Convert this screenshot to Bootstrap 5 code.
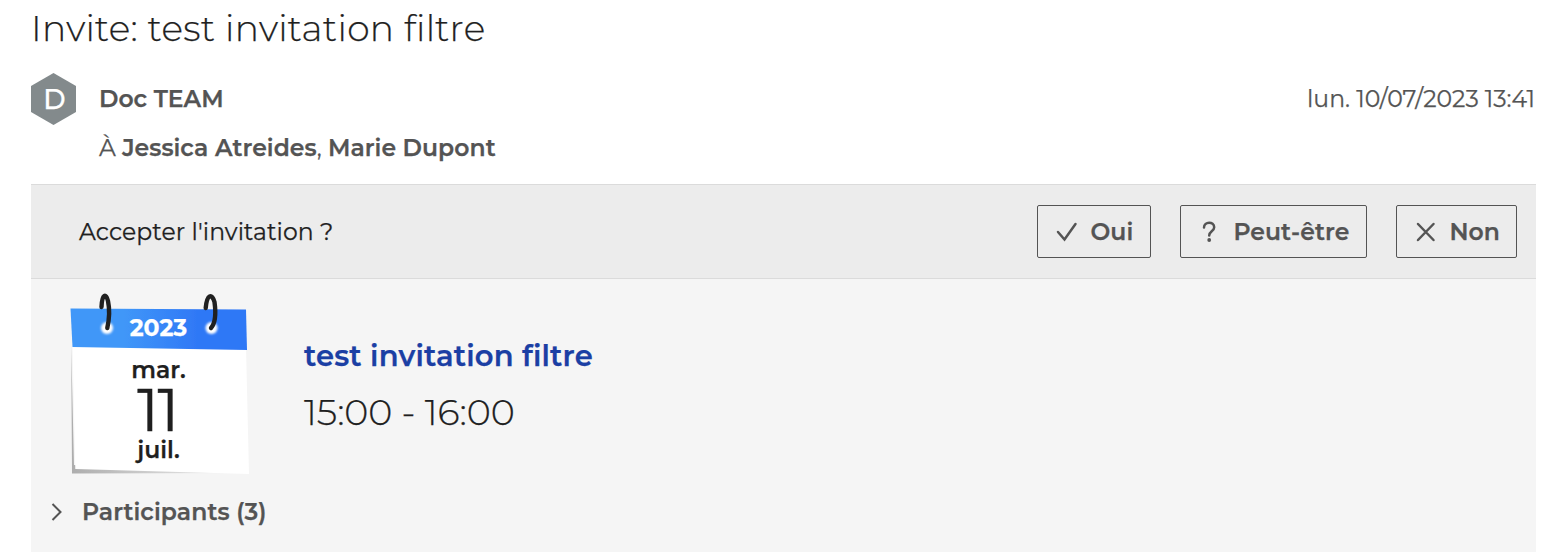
<!DOCTYPE html>
<html lang="fr">
<head>
<meta charset="utf-8">
<meta name="viewport" content="width=device-width, initial-scale=1">
<title>Invite: test invitation filtre</title>
<link href="https://cdn.jsdelivr.net/npm/bootstrap@5.3.0/dist/css/bootstrap.min.css" rel="stylesheet">
<style>
  body { font-family: Montserrat, Inter, "Open Sans", sans-serif; font-size: 23.5px; line-height: 30px; color: #1f1f1f; background: #fff; overflow: hidden; -webkit-text-stroke: .25px; }
  .message { padding: 0 28px 0 31px; height: 552px; }
  .subject { font-size: 36px; font-weight: 300; line-height: 44px; letter-spacing: .32px; padding: 6px 0 0; height: 73px; }
  .muted-ink { color: #545454; }
  .semi { font-weight: 600; }
  .avatar { width: 45px; height: 52px; background: #838a8c; color: #fff; font-size: 27px; font-weight: 500; padding: 1px 0 0 2px; clip-path: polygon(50% 0, 100% 25%, 100% 75%, 50% 100%, 0 75%, 0 25%); }
  .sender { height: 52px; padding-right: 1px; }
  .sender-name { margin-left: 23px; }
  .recipients { height: 59px; padding: 8px 0 0 68px; letter-spacing: .05px; }
  .invite-bar { height: 95px; background: #ececec; border: solid #dbdbdb; border-width: 1px 0; padding: 0 19px 0 48px; }
  .question { letter-spacing: .08px; }
  .answers { gap: 29px; }
  .btn-answer { --bs-btn-font-size: 23.5px; --bs-btn-font-weight: 600; --bs-btn-color: #545454; --bs-btn-border-color: #545454; --bs-btn-border-radius: 2px; --bs-btn-padding-y: 0; --bs-btn-padding-x: 0; height: 53px; padding-left: 18px; letter-spacing: .1px; }
  .b1 { width: 114px; } .b2 { width: 187px; } .b3 { width: 121px; }
  .btn-answer span { margin-left: 12.4px; }
  .invite-body { flex: 1; background: #f5f5f5; }
  .event { height: 211px; }
  .calendar { width: 180px; height: 183px; margin: 13px 0 0 39px; }
  .calendar svg { position: absolute; left: 0; top: 0; }
  .cal-text { position: relative; padding-right: 3px; line-height: 28px; }
  .cal-year { color: #fff; font-weight: 700; padding-top: 22px; height: 56px; }
  .cal-week { font-weight: 600; height: 36px; padding-top: 8px; }
  .cal-day { font-size: 60px; font-weight: 400; line-height: 52px; height: 52px; letter-spacing: -1.5px; padding-right: 2px; -webkit-text-stroke: .5px; }
  .details { margin: 59px 0 0 54px; }
  .event-title { color: #1b3fa4; font-size: 29px; font-weight: 600; line-height: 36px; letter-spacing: .2px; }
  .event-time { font-size: 36.5px; font-weight: 300; line-height: 44px; margin-top: 16px; letter-spacing: -.06px; }
  .participants { padding: 7px 0 0 20px; }
  .participants-label { margin-left: 19px; letter-spacing: .08px; }
</style>
</head>
<body>
<main class="message d-flex flex-column">
  <h1 class="subject m-0">Invite: test invitation filtre</h1>
  <header class="sender d-flex align-items-center muted-ink">
    <div class="avatar d-flex align-items-center justify-content-center"><span>D</span></div>
    <span class="sender-name semi">Doc TEAM</span>
    <time class="ms-auto">lun. 10/07/2023 13:41</time>
  </header>
  <div class="recipients muted-ink"><span>À</span> <span class="semi">Jessica Atreides</span>, <span class="semi">Marie Dupont</span></div>
  <section class="invite-bar d-flex align-items-center justify-content-between">
    <span class="question">Accepter l'invitation ?</span>
    <div class="answers d-flex">
      <button class="btn btn-answer b1 d-flex align-items-center"><svg width="22" height="22" viewBox="0 0 22 22" fill="none" stroke="currentColor" stroke-width="2.5" stroke-linecap="round"><path d="M2 11 8.500 18.500 19.500 3"/></svg><span>Oui</span></button>
      <button class="btn btn-answer b2 d-flex align-items-center"><svg width="22" height="22" viewBox="0 0 22 22"><path d="M5 6.500C5 .3 15.200.2 15.200 6.200c0 4.200-5 4-5 8.300" fill="none" stroke="currentColor" stroke-width="2.500" stroke-linecap="round"/><circle cx="10.200" cy="19" r="1.900" fill="currentColor"/></svg><span>Peut-être</span></button>
      <button class="btn btn-answer b3 d-flex align-items-center"><svg width="22" height="22" viewBox="0 0 22 22" fill="none" stroke="currentColor" stroke-width="2.5" stroke-linecap="round"><path d="m3 3 15.500 16M18.500 3 3 19"/></svg><span>Non</span></button>
    </div>
  </section>
  <section class="invite-body">
    <div class="event d-flex">
      <div class="calendar position-relative">
        <svg width="180" height="183" viewBox="70 292 180 183">
          <defs>
            <linearGradient id="head"><stop offset=".3" stop-color="#4097f8"/><stop offset=".72" stop-color="#2f78f6"/></linearGradient>
            <linearGradient id="shade"><stop stop-color="#adadad"/><stop offset="1" stop-color="#f0f0f0"/></linearGradient>
            <filter id="soft"><feGaussianBlur stdDeviation=".7"/></filter>
            <filter id="glow" x="-50%" y="-50%" width="200%" height="200%"><feGaussianBlur stdDeviation=".8"/></filter>
          </defs>
          <path d="M71.200 345 72 473.500 237 473 74 465Z" fill="url(#shade)"/>
          <path d="M72.500 345 246 347 249 474 75.300 469Z" fill="#fff"/>
          <path d="M70.500 308.500 246 309.500 247 350 72.500 347Z" fill="url(#head)" filter="url(#soft)"/>
          <g fill="#fff" filter="url(#glow)"><circle cx="107" cy="328" r="6"/><circle cx="211.500" cy="328" r="6"/></g>
          <g fill="none" stroke="#202020" stroke-width="4.400" stroke-linecap="round"><path d="M101.500 307C102 294 106 293 108 301c1.500 7 1.500 17-.700 27"/><path d="M205.700 308C207 294 212 293 214.500 302c1.500 11 1 21-3.500 26"/></g>
        </svg>
        <div class="cal-text text-center">
          <div class="cal-year">2023</div>
          <div class="cal-week">mar.</div>
          <div class="cal-day">11</div>
          <div class="semi">juil.</div>
        </div>
      </div>
      <div class="details">
        <div class="event-title">test invitation filtre</div>
        <div class="event-time">15:00 - 16:00</div>
      </div>
    </div>
    <div class="participants d-flex align-items-center muted-ink semi">
      <svg width="12" height="20" viewBox="0 0 12 20" fill="none" stroke="currentColor" stroke-width="2"><path d="m1.500 2 8 8-8 8"/></svg>
      <span class="participants-label">Participants (3)</span>
    </div>
  </section>
</main>
<script src="https://cdn.jsdelivr.net/npm/bootstrap@5.3.0/dist/js/bootstrap.bundle.min.js"></script>
</body>
</html>
